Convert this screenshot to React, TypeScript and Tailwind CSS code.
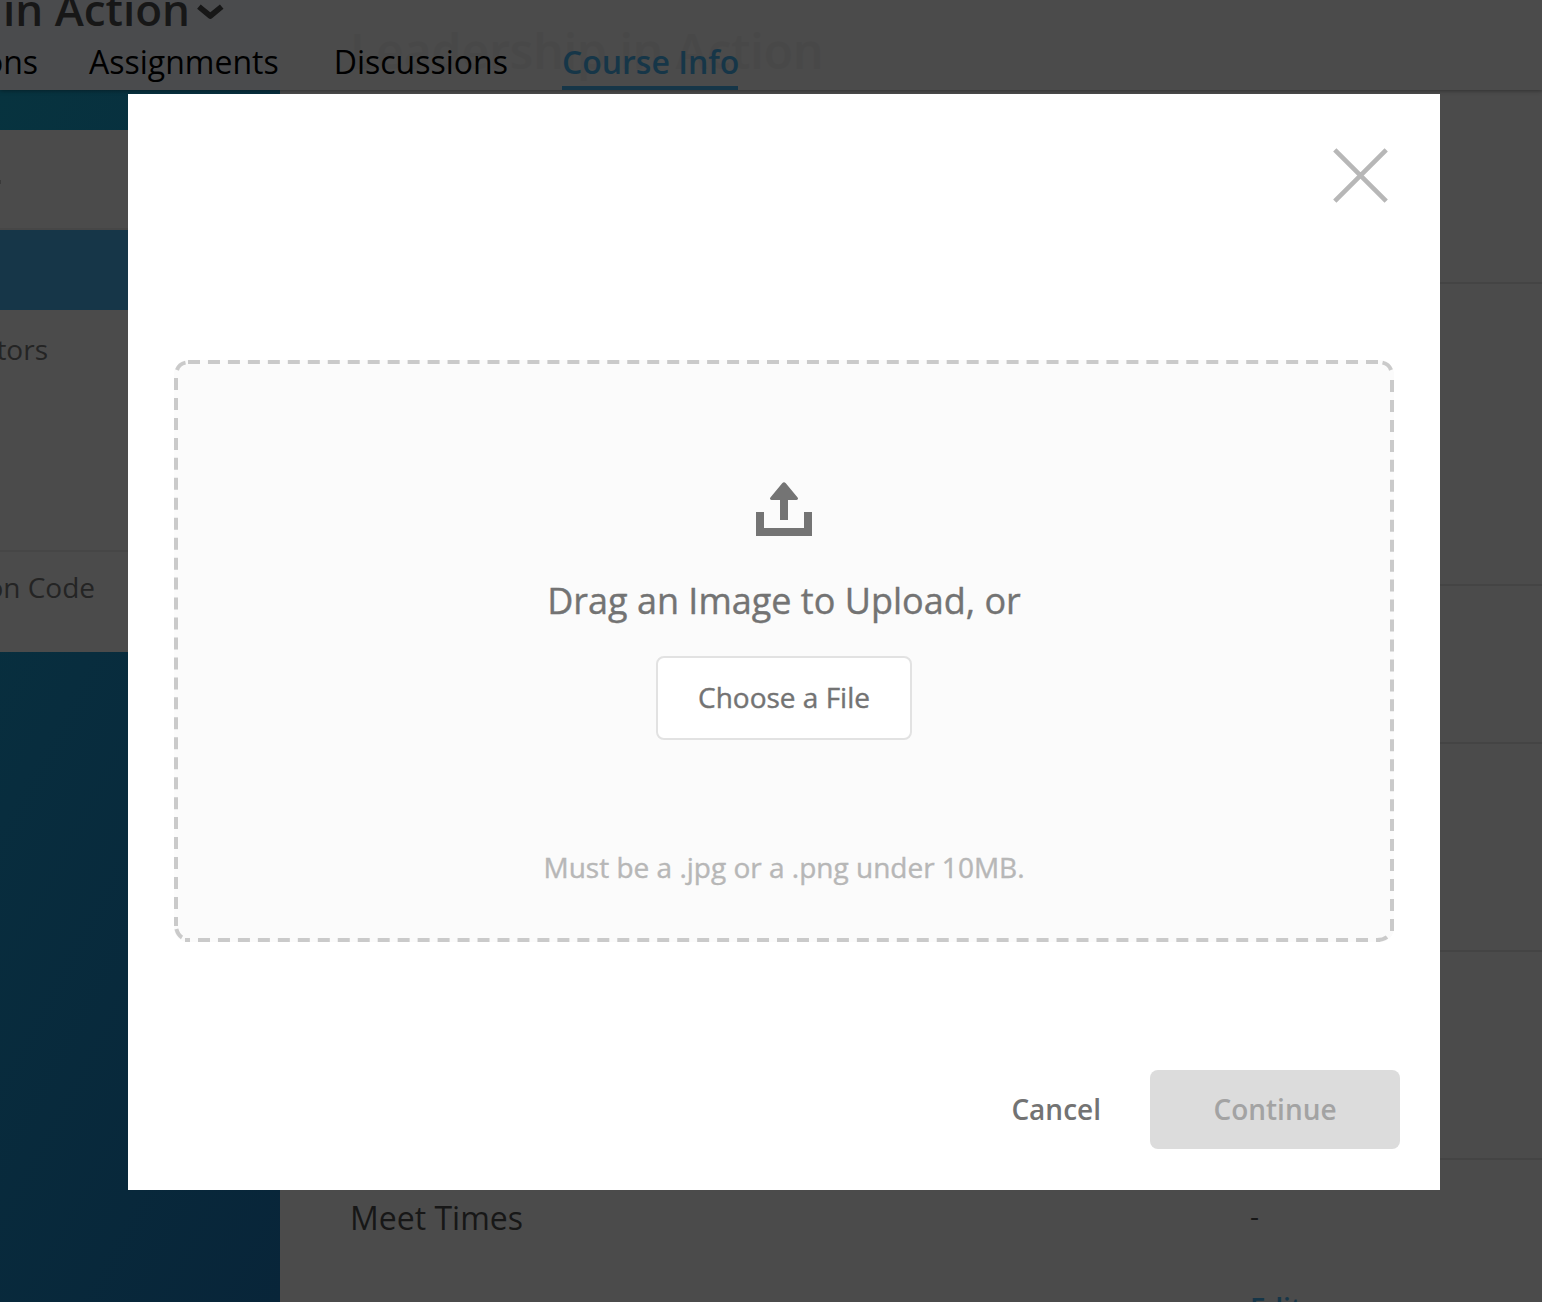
import React from "react";

const detailRows = ["h-[194px]", "h-[302px]", "h-[158px]", "h-[208px]", "h-[208px]"];

function Header() {
  return (
    <header className="relative z-10 h-[90px] bg-[linear-gradient(to_right,#4a4b4d_280px,#4b4b4b_280px)] shadow-[0_1px_4px_rgba(0,0,0,0.35)]">
      <div className="absolute top-[18px] left-[350px] text-[48px] leading-[66px] font-semibold whitespace-nowrap text-[#484848]">
        Leadership in Action
      </div>
      <div className="relative flex h-[42px] items-start">
        <h1 className="-mt-[22px] ml-[3px] flex items-center text-[44px] leading-[62px] font-semibold whitespace-nowrap text-[#171717]">
          in Action
        </h1>
        <svg className="mt-[2px] ml-[6px] h-5 w-7" viewBox="0 0 28 20" fill="none" stroke="#171717" strokeWidth="5.6" strokeLinejoin="round">
          <path d="M2.9 4.7 L14.3 14 L25.7 4.7" />
        </svg>
      </div>
      <nav className="relative flex h-12 text-[32px] leading-[40px] whitespace-nowrap text-black">
        <span className="flex w-[38px] justify-end overflow-hidden">ons</span>
        <span className="ml-[51px]">Assignments</span>
        <span className="ml-[55px]">Discussions</span>
        <span className="ml-[54px] w-[176px] border-b-4 border-[#163648] font-semibold text-[#163648]">Course Info</span>
      </nav>
    </header>
  );
}

function Sidebar() {
  return (
    <aside className="w-[280px] bg-[linear-gradient(118deg,#07333f_0%,#082d3e_42%,#082539_100%)] pt-10">
      <div className="flex h-[522px] flex-col bg-[#4b4b4b] text-[28px] leading-[38px] text-[#242424]">
        <div className="h-[100px] border-b-2 border-[#464646] pt-[50px]">
          <div className="h-1 w-px bg-[#3a3a3a]" />
        </div>
        <div className="h-20 bg-[#163648]" />
        <div className="h-[242px] border-b-2 border-[#464646] pt-[20px]">
          <div className="flex w-12 justify-end overflow-hidden">tors</div>
        </div>
        <div className="flex h-[100px] w-[95px] justify-end overflow-hidden pt-[16px] whitespace-nowrap">on Code</div>
      </div>
    </aside>
  );
}

function Details() {
  return (
    <main className="flex-1 overflow-hidden bg-[#4b4b4b]">
      {detailRows.map((height, i) => (
        <div key={i} className={`${height} border-b-2 border-[#444444]`} />
      ))}
      <div className="flex pt-[38px] pl-[70px] text-[#171717]">
        <div className="w-[900px] text-[32px] leading-[40px]">Meet Times</div>
        <div className="text-[28px] leading-[38px]">
          <div className="-mt-[2px]">-</div>
          <div className="mt-[55px] font-semibold text-[#163648]">Edit</div>
        </div>
      </div>
    </main>
  );
}

function UploadIcon() {
  return (
    <svg className="h-14 w-14" viewBox="0 0 56 56" fill="#747474">
      <path d="M0 30H8V46H48V30H56V54H0Z" />
      <path d="M24 38V18H15.5Q13.2 17.6 14.4 15.4L26.2 1.2Q28 -0.8 29.8 1.2L41.6 15.4Q42.8 17.6 40.5 18H32V38Z" />
    </svg>
  );
}

function UploadDialog() {
  return (
    <div role="dialog" className="absolute top-[94px] left-32 z-20 flex h-[1096px] w-[1312px] flex-col bg-white text-[#737373]">
      <div className="flex h-[266px] justify-end pt-[54px] pr-[52px]">
        <button aria-label="Close" className="h-[55px] w-[55px]">
          <svg className="h-[55px] w-[55px]" viewBox="0 0 55 55" stroke="#b7b7b7" strokeWidth="4.6">
            <path d="M1.8 1.8L53.2 53.2M53.2 1.8L1.8 53.2" />
          </svg>
        </button>
      </div>
      <div className="relative mx-[46px] flex h-[582px] flex-col items-center rounded-[14px] bg-[#fbfbfb] pt-[122px]">
        <svg className="pointer-events-none absolute inset-0 h-[582px] w-[1220px]" fill="none" stroke="#cacaca" strokeWidth="4">
          <path d="M14 2H1206" strokeDasharray="12 7.966" />
          <path d="M24 580H1206" strokeDasharray="12 7.966" />
          <path d="M2 18V566" strokeDasharray="12 7.96" />
          <path d="M1218 20V571" strokeDasharray="12 7.96" />
          <path d="M3 10Q5 4 11.5 2.6M1208.5 2.6Q1215 4 1217 10M2.4 569Q4 575 8 577.5M11 580H16M1203 580Q1209 580 1213 577" />
        </svg>
        <UploadIcon />
        <p className="mt-[38px] text-[36px] leading-[50px] whitespace-nowrap [-webkit-text-stroke:0.4px]">Drag an Image to Upload, or</p>
        <button className="mt-[30px] h-[84px] w-64 rounded-lg border-2 border-[#e2e2e2] bg-white pb-[2px] text-[28px] leading-[38px] [-webkit-text-stroke:0.4px]">
          Choose a File
        </button>
        <p className="mt-[108px] text-[28px] leading-[38px] whitespace-nowrap text-[#b7b7b7] [-webkit-text-stroke:0.4px]">Must be a .jpg or a .png under 10MB.</p>
      </div>
      <div className="mt-32 flex justify-end pr-10 text-[28px] leading-[38px] font-semibold">
        <button className="mr-[49px] h-[79px] pb-[2px]">Cancel</button>
        <button className="h-[79px] w-[250px] rounded-lg bg-[#dcdcdc] pb-[2px] text-[#a3a3a3]">Continue</button>
      </div>
    </div>
  );
}

export default function App() {
  return (
    <div className="relative flex h-[1302px] w-[1542px] flex-col overflow-hidden bg-[#4b4b4b] font-['Open_Sans','Noto_Sans',sans-serif]">
      <Header />
      <div className="flex min-h-0 flex-1">
        <Sidebar />
        <Details />
      </div>
      <UploadDialog />
    </div>
  );
}
